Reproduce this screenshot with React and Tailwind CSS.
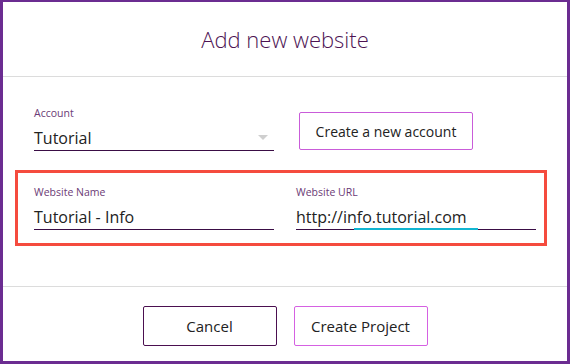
import React from 'react'

const font = { fontFamily: '"Open Sans", "Liberation Sans", sans-serif' }

function Field({ label, value, children }) {
  return (
    <div className="w-[240px]">
      <div className="text-[10.5px] leading-[14px] text-[#6b3b76]">{label}</div>
      <div className="relative mt-[5px] border-b border-[#3a0d45] h-[26px] flex items-center">
        <span className="text-[16px] leading-[24px] text-[#222]">{value}</span>
        {children}
      </div>
    </div>
  )
}

export default function App() {
  return (
    <div
      className="w-[570px] h-[364px] flex flex-col bg-white border-[#6b2c91] border-l-[3px] border-r-[3px] border-t-2 border-b-[3px]"
      style={font}
    >
      {/* Header */}
      <div className="h-[75px] flex items-center justify-center border-b border-[#dcdcdc]">
        <h1 className="text-[22px] font-light text-[#4d1353]">Add new website</h1>
      </div>

      {/* Body */}
      <div className="flex-1 px-[12px] pt-[29px] border-b border-[#dcdcdc]">
        <div className="flex items-start pl-[19px]">
          <Field label="Account" value="Tutorial">
            <span className="absolute right-[6px] top-[10px] w-0 h-0 border-l-[5px] border-r-[5px] border-t-[5px] border-l-transparent border-r-transparent border-t-[#cfcfcf]" />
          </Field>
          <button className="ml-[25px] mt-[6px] w-[174px] h-[38px] border border-[#c95cd9] rounded-[2px] text-[14px] text-[#222]">
            Create a new account
          </button>
        </div>

        <div className="mt-[19px] w-[532px] h-[76px] border-[3px] border-[#f54b3e] pl-[16px] pt-[12px] flex gap-[22px]">
          <Field label="Website Name" value="Tutorial - Info" />
          <Field label="Website URL" value="http://info.tutorial.com">
            <span className="absolute left-[58px] -bottom-[1px] w-[124px] h-[2px] bg-[#12b5d1]" />
          </Field>
        </div>
      </div>

      {/* Footer */}
      <div className="h-[74px] flex items-start justify-center gap-[17px] pt-[19px]">
        <button className="w-[134px] h-[40px] border border-[#4b0f50] rounded-[2px] text-[15px] text-[#222]">
          Cancel
        </button>
        <button className="w-[134px] h-[40px] border border-[#d561e2] rounded-[2px] text-[15px] text-[#222]">
          Create Project
        </button>
      </div>
    </div>
  )
}
